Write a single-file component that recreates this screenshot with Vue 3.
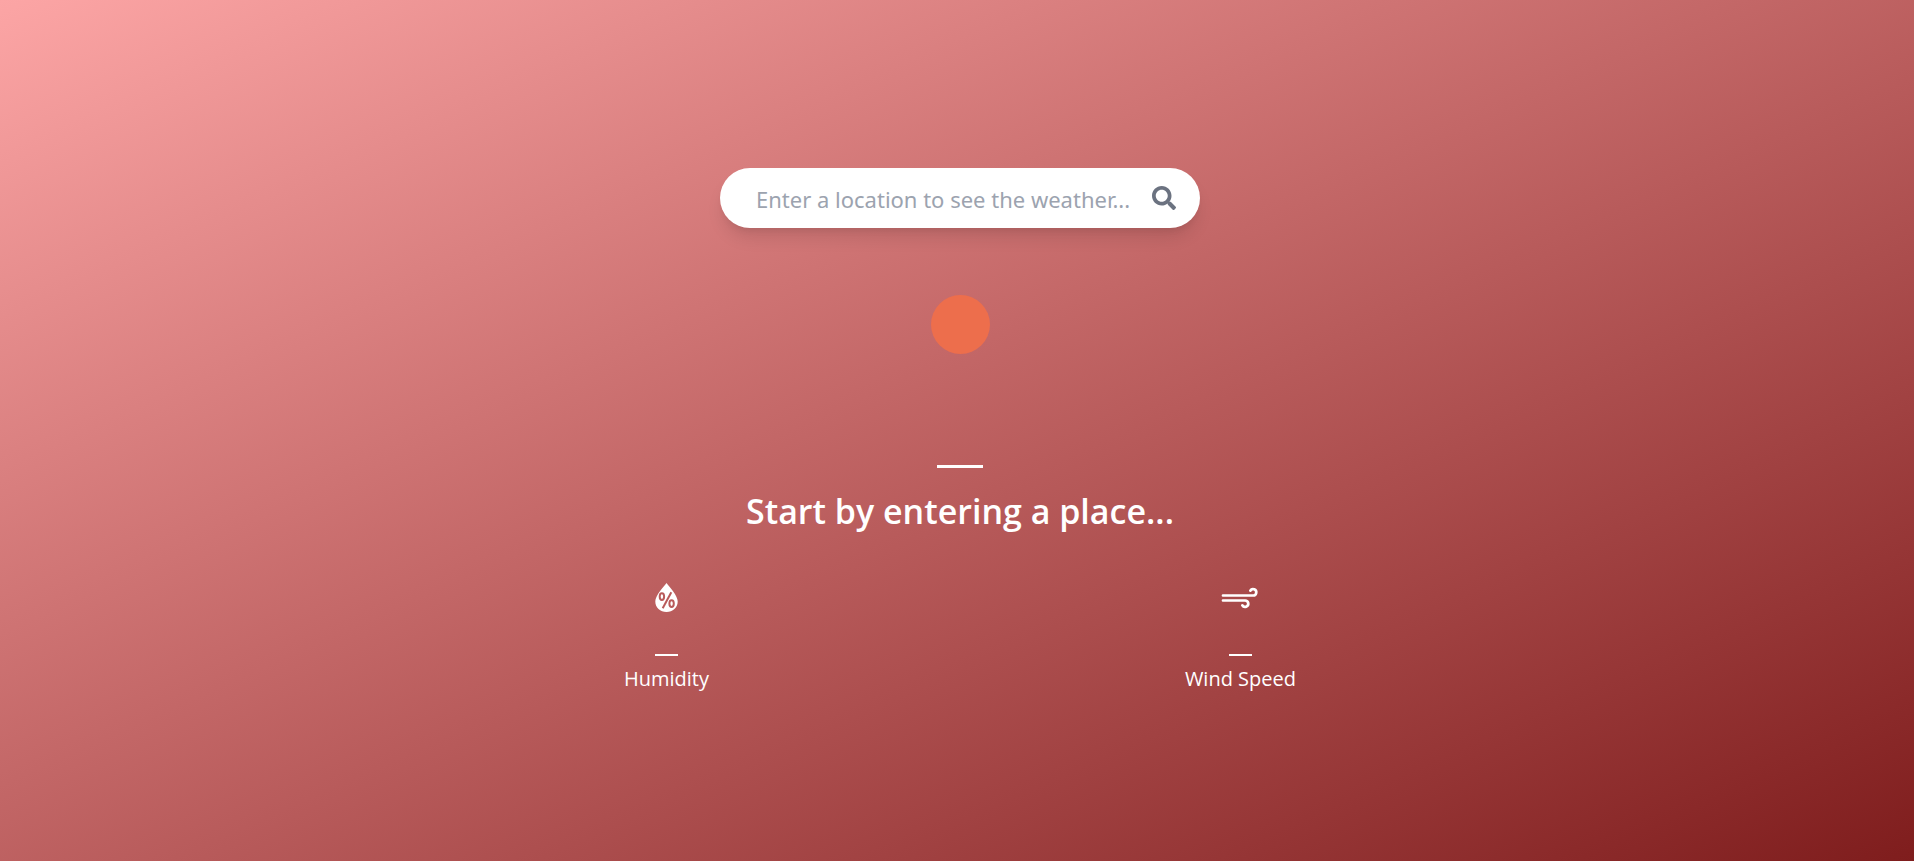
<script setup>
import { ref } from 'vue'

const place = ref('')
</script>

<template>
  <main class="weather">
    <form class="search" @submit.prevent>
      <input
        v-model="place"
        class="field"
        type="text"
        aria-label="Location"
        placeholder="Enter a location to see the weather..."
      />
      <button class="submit" type="submit" aria-label="Search">
        <svg viewBox="0 0 512 512" width="24" height="24" fill="currentColor" aria-hidden="true">
          <path d="M505 442.700 405.300 343c-4.500-4.500-10.600-7-17-7H372c27.600-35.300 44-79.700 44-128C416 93.100 322.900 0 208 0S0 93.100 0 208s93.100 208 208 208c48.300 0 92.700-16.400 128-44v16.300c0 6.400 2.500 12.500 7 17l99.700 99.700c9.400 9.400 24.600 9.400 33.900 0l28.300-28.300c9.400-9.400 9.400-24.600.1-34zM208 336c-70.700 0-128-57.200-128-128 0-70.700 57.200-128 128-128 70.700 0 128 57.200 128 128 0 70.700-57.200 128-128 128z" />
        </svg>
      </button>
    </form>

    <div class="sun"></div>

    <div class="blank"></div>
    <h1 class="title">Start by entering a place...</h1>

    <section class="details">
      <div class="detail">
        <svg class="icon" viewBox="0 0 32 32" width="32" height="32" aria-hidden="true">
          <path
            fill="currentColor"
            d="M15.500 1C12.500 5 4.300 13.500 4.300 19.500c0 6 5 10.500 11.200 10.500s11.200-4.500 11.200-10.500C26.700 13.500 18.500 5 15.500 1z"
          />
          <g class="percent" fill="none">
            <ellipse cx="10.900" cy="14.600" rx="2.200" ry="3.400" />
            <ellipse cx="20.600" cy="21.600" rx="2.200" ry="3.400" />
            <path d="M20.300 10.300 11.700 26.300" />
          </g>
        </svg>
        <div class="blank small"></div>
        <p class="label">Humidity</p>
      </div>
      <div class="detail">
        <svg
          class="icon"
          viewBox="0 0 38 32"
          width="38"
          height="32"
          fill="none"
          stroke="currentColor"
          stroke-width="2.700"
          stroke-linecap="round"
          aria-hidden="true"
        >
          <path d="M2 13.500H32A3.200 3.200 0 1 0 29.300 8.700" />
          <path d="M2 18.500H24A3.200 3.200 0 1 1 21.300 23.300" />
        </svg>
        <div class="blank small"></div>
        <p class="label">Wind Speed</p>
      </div>
    </section>
  </main>
</template>

<style>
body {
  margin: 0;
}
</style>

<style scoped>
.weather {
  box-sizing: border-box;
  min-height: 100vh;
  padding: 168px 0 48px 6px;
  display: flex;
  flex-direction: column;
  align-items: center;
  color: #fff;
  font-family: "Segoe UI", "Open Sans", sans-serif;
  background: linear-gradient(to bottom right, #fca5a5, #7f1d1d);
}

.search {
  box-sizing: border-box;
  width: 480px;
  max-width: 100%;
  height: 60px;
  padding: 0 24px 0 36px;
  display: flex;
  align-items: center;
  background: #fff;
  border-radius: 30px;
  box-shadow: 0 12px 18px -4px rgba(0, 0, 0, 0.12), 0 5px 8px -5px rgba(0, 0, 0, 0.1);
}

.field {
  flex: 1;
  min-width: 0;
  padding: 2px 0 0;
  border: 0;
  outline: 0;
  background: transparent;
  color: #374151;
  font-family: "Segoe UI", "Noto Sans", sans-serif;
  font-size: 22px;
  line-height: 32px;
}

.field::placeholder {
  color: #9ca3af;
  opacity: 1;
}

.submit {
  display: flex;
  padding: 0;
  border: 0;
  background: none;
  color: #6b7280;
  cursor: pointer;
}

.sun {
  width: 59px;
  height: 59px;
  margin-top: 67px;
  border-radius: 50%;
  background: #ed6e4c;
}

.blank {
  width: 46px;
  height: 3px;
  margin-top: 111px;
  background: #fff;
}

.title {
  margin: 23px 0 0;
  font-size: 34px;
  font-weight: 600;
  line-height: 40px;
}

.details {
  width: 672px;
  max-width: 100%;
  margin-top: 51px;
  display: flex;
  justify-content: space-between;
}

.detail {
  display: flex;
  flex-direction: column;
  align-items: center;
}

.icon {
  display: block;
}

.percent {
  stroke: #b95b5b;
  stroke-width: 2;
}

.small {
  width: 23px;
  height: 2px;
  margin-top: 40px;
}

.label {
  margin: 9px 0 0;
  font-size: 20px;
  line-height: 28px;
}
</style>
